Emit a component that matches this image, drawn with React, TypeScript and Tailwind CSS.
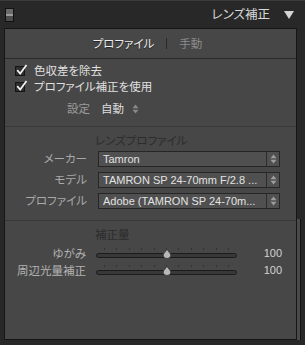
import React from 'react';

const UpDown = ({ color = '#a8a8a8' }: { color?: string }) => (
  <svg width="7" height="10" viewBox="0 0 7 10">
    <path d="M0.5 4.2 L3.5 0.6 L6.5 4.2 Z" fill={color} />
    <path d="M0.5 5.8 L3.5 9.4 L6.5 5.8 Z" fill={color} />
  </svg>
);

const Check = () => (
  <div className="relative w-[10px] h-[10px] border border-[#151515] bg-[#2e2e2e] shrink-0">
    <svg width="12" height="12" viewBox="0 0 12 12" className="absolute left-0 -top-[3px]">
      <path d="M1.8 6.8 L4.2 9.6 L10 1.6" stroke="#f2f2f2" strokeWidth="1.7" fill="none" strokeLinecap="square" />
    </svg>
  </div>
);

const Select = ({ label, value }: { label: string; value: string }) => (
  <div className="flex items-center h-[16px]">
    <div className="w-[82px] text-right text-[11.5px] text-[#a9a9a9] leading-none">{label}</div>
    <div className="ml-[11px] w-[182px] h-[16px] flex border border-[#262626] bg-[#505050]">
      <div className="flex-1 pl-[4px] flex items-center text-[11px] leading-none text-[#e2e2e2] font-['Liberation_Sans','Noto_Sans_CJK_JP',sans-serif] whitespace-nowrap overflow-hidden">
        {value}
      </div>
      <div className="w-[13px] border-l border-[#2c2c2c] flex items-center justify-center">
        <UpDown color="#9c9c9c" />
      </div>
    </div>
  </div>
);

const Slider = ({ label }: { label: string }) => {
  const ticks = [0, 1, 2, 3, 4, 5, 6, 7, 8, 9, 10];
  return (
    <div className="flex items-center h-[17px]">
      <div className="w-[81px] text-right text-[11.5px] text-[#b2b2b2] leading-none">{label}</div>
      <div className="relative ml-[10px] w-[141px] h-[12px] flex flex-col">
        <div className="h-[3px] mx-[8px] flex justify-between">
          {ticks.map((t) => (
            <div key={t} className="w-px h-[2px] bg-[#333333]" />
          ))}
        </div>
        <div className="mt-[2px] h-[5px] rounded-full border border-[#1c1c1c] bg-[#383838]" />
        <svg width="10" height="10" viewBox="0 0 10 10" className="absolute left-[66px] top-[1px]">
          <path d="M5 0.5 L8.5 5 Q9.5 9 5 9.5 Q0.5 9 1.5 5 Z" fill="#b8b8b8" stroke="#3a3a3a" strokeWidth="0.8" />
        </svg>
      </div>
      <div className="flex-1 pr-[14px] text-right text-[11px] leading-none text-[#d2d2d2] font-['Liberation_Sans',sans-serif]">
        100
      </div>
    </div>
  );
};

export default function App() {
  return (
    <div className="w-[305px] h-[345px] bg-[#282828] overflow-hidden font-['Noto_Sans_CJK_JP',sans-serif] [font-feature-settings:'palt'] select-none">
      <div className="h-px bg-[#3a3a3a]" />
      {/* header */}
      <div className="h-[27px] flex items-center pl-[5px] pr-[11px]">
        <div className="w-[9px] h-[14px] border border-[#111111] flex flex-col">
          <div className="h-[5px] bg-[#6a6a6a]" />
          <div className="h-[2px] bg-[#9a9a9a]" />
          <div className="flex-1 bg-[#4c4c4c]" />
        </div>
        <span className="ml-auto text-[12.5px] leading-none text-[#d8d8d8]">レンズ補正</span>
        <svg width="10" height="8" viewBox="0 0 10 8" className="ml-[14px]">
          <path d="M0 0 L10 0 L5 8 Z" fill="#d4d4d4" />
        </svg>
      </div>

      <div className="flex">
        <div className="ml-[4px] w-[293px] h-[312px] border border-[#161616] bg-[#474747] flex flex-col">
          {/* tabs */}
          <div className="h-[30px] shrink-0 border-b border-[#2a2a2a] flex items-center justify-center text-[11.5px] leading-none pr-[6px]">
            <span className="text-[#ececec] [text-shadow:0_1px_1px_#222]">プロファイル</span>
            <span className="mx-[12px] w-px h-[11px] bg-[#2a2a2a]" />
            <span className="text-[#8c8c8c]">手動</span>
          </div>

          {/* checkboxes */}
          <div className="pt-[4px] pl-[10px] flex flex-col">
            <div className="h-[16px] flex items-center">
              <Check />
              <span className="ml-[9px] text-[11.5px] leading-none text-[#e0e0e0]">色収差を除去</span>
            </div>
            <div className="h-[16px] flex items-center">
              <Check />
              <span className="ml-[9px] text-[11.5px] leading-none text-[#e0e0e0]">プロファイル補正を使用</span>
            </div>
            <div className="mt-[6px] h-[16px] flex items-center pl-[52px]">
              <span className="text-[11.5px] leading-none text-[#9c9c9c]">設定</span>
              <span className="ml-[11px] text-[11.5px] leading-none text-[#dedede]">自動</span>
              <span className="ml-[8px]">
                <UpDown color="#8a8a8a" />
              </span>
            </div>
          </div>

          <div className="mt-[9px] h-px bg-[#393939]" />

          {/* lens profile */}
          <div className="mt-[7px] h-[14px] pl-[90px] text-[11.5px] leading-none text-[#2c2c2c] flex items-center">
            レンズプロファイル
          </div>
          <div className="mt-[3px] flex flex-col gap-[5px]">
            <Select label="メーカー" value="Tamron" />
            <Select label="モデル" value="TAMRON SP 24-70mm F/2.8 ..." />
            <Select label="プロファイル" value="Adobe (TAMRON SP 24-70m..." />
          </div>

          <div className="mt-[11px] h-px bg-[#393939]" />

          {/* amount */}
          <div className="mt-[7px] h-[14px] pl-[90px] text-[11.5px] leading-none text-[#2c2c2c] flex items-center">
            補正量
          </div>
          <div className="mt-[3px] flex flex-col">
            <Slider label="ゆがみ" />
            <Slider label="周辺光量補正" />
          </div>
        </div>
        <div className="mt-[191px] w-[4px] h-[121px] bg-[#4a4a4a] border-r border-[#111111]" />
      </div>
    </div>
  );
}
